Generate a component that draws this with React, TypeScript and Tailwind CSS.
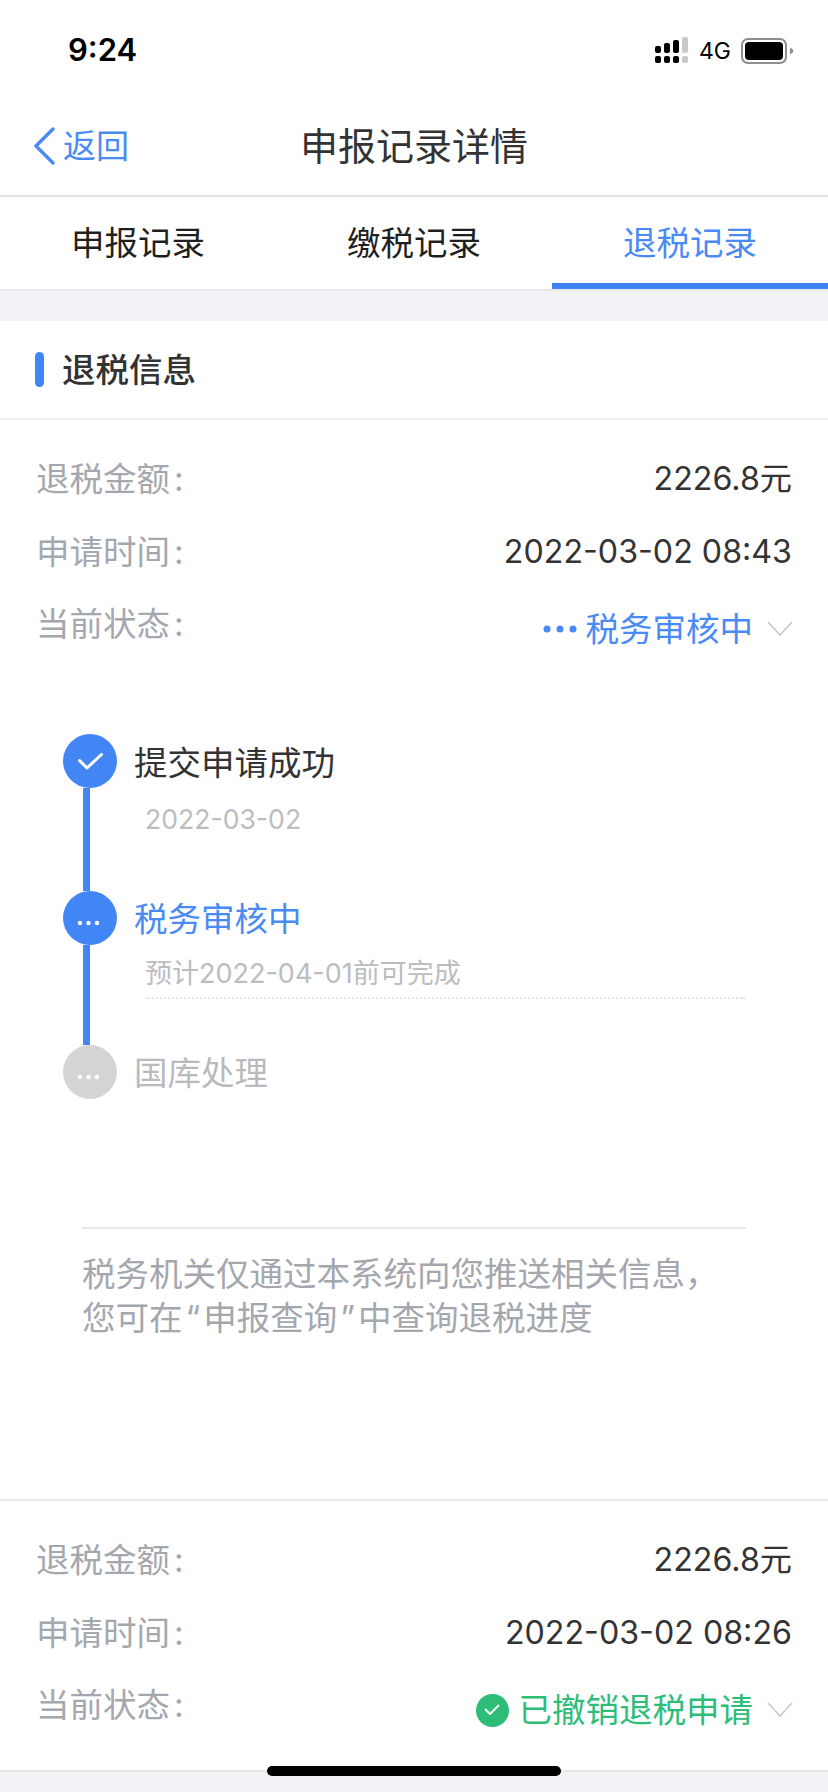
import React from 'react';

const FONT = "font-['Inter','Noto_Sans_CJK_SC',sans-serif]";

const SignalIcon = () => (
  <svg width="34" height="27" viewBox="0 0 34 27" className="block">
    <rect x="0" y="9" width="6" height="7" rx="2" fill="#000" />
    <rect x="9" y="6" width="6" height="10" rx="2" fill="#000" />
    <rect x="18" y="3" width="6" height="13" rx="2" fill="#000" />
    <rect x="27" y="0" width="6" height="16" rx="2" fill="#c9c9c9" />
    <rect x="0" y="19" width="6" height="7" rx="2" fill="#000" />
    <rect x="9" y="19" width="6" height="7" rx="2" fill="#000" />
    <rect x="18" y="19" width="6" height="7" rx="2" fill="#000" />
    <rect x="27" y="19" width="6" height="7" rx="2" fill="#c9c9c9" />
  </svg>
);

const BatteryIcon = () => (
  <svg width="53" height="26" viewBox="0 0 53 26" className="block">
    <rect x="1" y="1" width="44" height="24" rx="6" fill="none" stroke="#8e8e8e" strokeWidth="2" />
    <rect x="4" y="4" width="38" height="18" rx="4" fill="#000" />
    <path d="M49 9.5 L52 11.5 V14.5 L49 16.5 Z" fill="#8e8e8e" />
  </svg>
);

const BackIcon = () => (
  <svg width="22" height="38" viewBox="0 0 22 38" className="block">
    <path d="M20 2 L3 19 L20 36" fill="none" stroke="#4a8af4" strokeWidth="3.4" strokeLinecap="round" strokeLinejoin="round" />
  </svg>
);

const Caret = () => (
  <svg width="26" height="16" viewBox="0 0 26 16" className="ml-[14px] -mr-[1px] block">
    <path d="M1 1 L13 14 L25 1" fill="none" stroke="#c8c8c8" strokeWidth="1.6" />
  </svg>
);

const StepCheck = () => (
  <svg width="27" height="19" viewBox="0 0 27 19" className="block">
    <path d="M2.5 8.5 L10 16 L24.5 2.5" fill="none" stroke="#ffffff" strokeWidth="3" strokeLinecap="round" strokeLinejoin="round" />
  </svg>
);

const GreenCheck = () => (
  <svg width="16" height="12" viewBox="0 0 16 12" className="block">
    <path d="M1.5 5.5 L6 10 L14.5 1.5" fill="none" stroke="#ffffff" strokeWidth="1.8" strokeLinecap="round" strokeLinejoin="round" />
  </svg>
);

const StatusDots = () => (
  <svg width="34" height="8" viewBox="0 0 34 8" className="block">
    <circle cx="4" cy="4" r="3.5" fill="#4a8af4" />
    <circle cx="17" cy="4" r="3.5" fill="#4a8af4" />
    <circle cx="30" cy="4" r="3.5" fill="#4a8af4" />
  </svg>
);

const StepDots = () => (
  <svg width="23" height="6" viewBox="0 0 23 6" className="mt-[9px] -ml-[4px] block">
    <circle cx="3" cy="3" r="2.2" fill="#ffffff" />
    <circle cx="11.5" cy="3" r="2.2" fill="#ffffff" />
    <circle cx="20" cy="3" r="2.2" fill="#ffffff" />
  </svg>
);

const InfoRow = ({ label, children, className }: { label: string; children: React.ReactNode; className: string }) => (
  <div className={`flex items-start justify-between px-[36px] ${className}`}>
    <span className="text-[33.5px] leading-[44px] text-[#a5a7ae]">
      {label}
      <span className="ml-[4px]">:</span>
    </span>
    {children}
  </div>
);

const Value = ({ children }: { children: React.ReactNode }) => (
  <span className="text-[32.2px] leading-[44px] text-[#333333]">{children}</span>
);

const StepDot = ({ color, children }: { color: string; children: React.ReactNode }) => (
  <div className={`flex h-[54px] w-[54px] shrink-0 items-center justify-center rounded-full ${color}`}>{children}</div>
);

export default function App() {
  return (
    <div className={`${FONT} flex h-[1792px] w-[828px] flex-col overflow-hidden bg-white`}>
      {/* status bar */}
      <div className="flex h-[97px] items-start justify-between pl-[68px] pr-[34px] pt-[31px]">
        <span className="text-[31px] font-semibold leading-[38px] text-black">9:24</span>
        <div className="flex items-center pt-[6px]">
          <SignalIcon />
          <span className="ml-[10px] mr-[10px] text-[23px] leading-[26px] text-black">4G</span>
          <BatteryIcon />
        </div>
      </div>

      {/* nav */}
      <div className="relative flex h-[100px] items-center justify-center border-b-2 border-[#e4e4e6]">
        <div className="absolute left-[33px] top-[29px] flex items-center gap-[8px]">
          <BackIcon />
          <span className="text-[33px] leading-[40px] text-[#4a8af4]">返回</span>
        </div>
        <span className="text-[38px] leading-[50px] text-[#333333]">申报记录详情</span>
      </div>

      {/* tabs */}
      <div className="grid h-[94px] grid-cols-3 border-b-2 border-[#e9e9ec]">
        <div className="flex items-center justify-center pt-[1px] text-[33.5px] text-[#1f1f1f]">申报记录</div>
        <div className="flex items-center justify-center pt-[1px] text-[33.5px] text-[#1f1f1f]">缴税记录</div>
        <div className="flex items-center justify-center border-b-[6px] border-[#3f83f3] pt-[7px] text-[33.5px] text-[#4a8af4]">退税记录</div>
      </div>

      <div className="h-[30px] bg-[#f2f3f7]" />

      {/* refund info */}
      <div className="flex h-[99px] items-center gap-[18px] border-b-2 border-[#eeeeef] pl-[35px]">
        <div className="h-[35px] w-[9px] rounded-full bg-[#4286f5]" />
        <span className="text-[33.5px] font-medium leading-[44px] text-[#333333]">退税信息</span>
      </div>

      <InfoRow label="退税金额" className="mt-[37px]">
        <Value>2226.8元</Value>
      </InfoRow>
      <InfoRow label="申请时间" className="mt-[29px]">
        <Value>2022-03-02 08:43</Value>
      </InfoRow>
      <InfoRow label="当前状态" className="mt-[28px]">
        <div className="flex items-center pt-[5px]">
          <StatusDots />
          <span className="ml-[9px] text-[33.5px] leading-[44px] text-[#4a8af4]">税务审核中</span>
          <Caret />
        </div>
      </InfoRow>

      {/* progress */}
      <div className="mt-[83px] pl-[63px]">
        <div className="flex h-[157px]">
          <div className="flex w-[54px] flex-col">
            <StepDot color="bg-[#4286f5]">
              <StepCheck />
            </StepDot>
            <div className="ml-[20px] w-[7px] flex-1 bg-[#4286f5]" />
          </div>
          <div className="ml-[17px]">
            <div className="mt-[7px] text-[33.5px] leading-[44px] text-[#333333]">提交申请成功</div>
            <div className="ml-[11px] mt-[16px] text-[26.6px] leading-[36px] text-[#bcbdc0]">2022-03-02</div>
          </div>
        </div>
        <div className="flex h-[154px]">
          <div className="flex w-[54px] flex-col">
            <StepDot color="bg-[#4286f5]">
              <StepDots />
            </StepDot>
            <div className="ml-[20px] w-[7px] flex-1 bg-[#4286f5]" />
          </div>
          <div className="ml-[17px]">
            <div className="mt-[6px] text-[33.5px] leading-[44px] text-[#4a8af4]">税务审核中</div>
            <div className="ml-[11px] mt-[15px] w-[600px] border-b-2 border-dotted border-[#e2e2e2] pb-[5px] text-[27px] leading-[36px] text-[#bcbdc0]">预计2022-04-01前可完成</div>
          </div>
        </div>
        <div className="flex">
          <StepDot color="bg-[#d4d4d4]">
            <StepDots />
          </StepDot>
          <div className="ml-[17px] mt-[6px] text-[33.5px] leading-[44px] text-[#b9babd]">国库处理</div>
        </div>
      </div>

      {/* notice */}
      <div className="mx-[82px] mt-[128px] border-t-2 border-[#e9e9ea] pt-[23px] text-[33.5px] leading-[44px] text-[#a5a7ae]">
        <div className="-mr-[10px] whitespace-nowrap">税务机关仅通过本系统向您推送相关信息，</div>
        <div className="whitespace-nowrap">
          您可在<span className="mx-[3px]">“</span>申报查询<span className="mx-[3px]">”</span>中查询退税进度
        </div>
      </div>

      {/* previous application */}
      <div className="mt-[159px] flex h-[271px] flex-col border-t-2 border-[#e6e6e8]">
        <InfoRow label="退税金额" className="mt-[37px]">
          <Value>2226.8元</Value>
        </InfoRow>
        <InfoRow label="申请时间" className="mt-[29px]">
          <Value>2022-03-02 08:26</Value>
        </InfoRow>
        <InfoRow label="当前状态" className="mt-[28px]">
          <div className="flex items-center pt-[5px]">
            <div className="flex h-[33px] w-[33px] items-center justify-center rounded-full bg-[#2dbd77]">
              <GreenCheck />
            </div>
            <span className="ml-[10px] text-[33.5px] leading-[44px] text-[#2dbd77]">已撤销退税申请</span>
            <Caret />
          </div>
        </InfoRow>
      </div>

      {/* footer strip, home indicator sits over it */}
      <div className="relative flex-1 border-t-2 border-[#e6e6e8] bg-[#f2f3f7]">
        <div className="absolute left-[267px] -top-[6px] h-[10px] w-[294px] rounded-full bg-black" />
      </div>
    </div>
  );
}
